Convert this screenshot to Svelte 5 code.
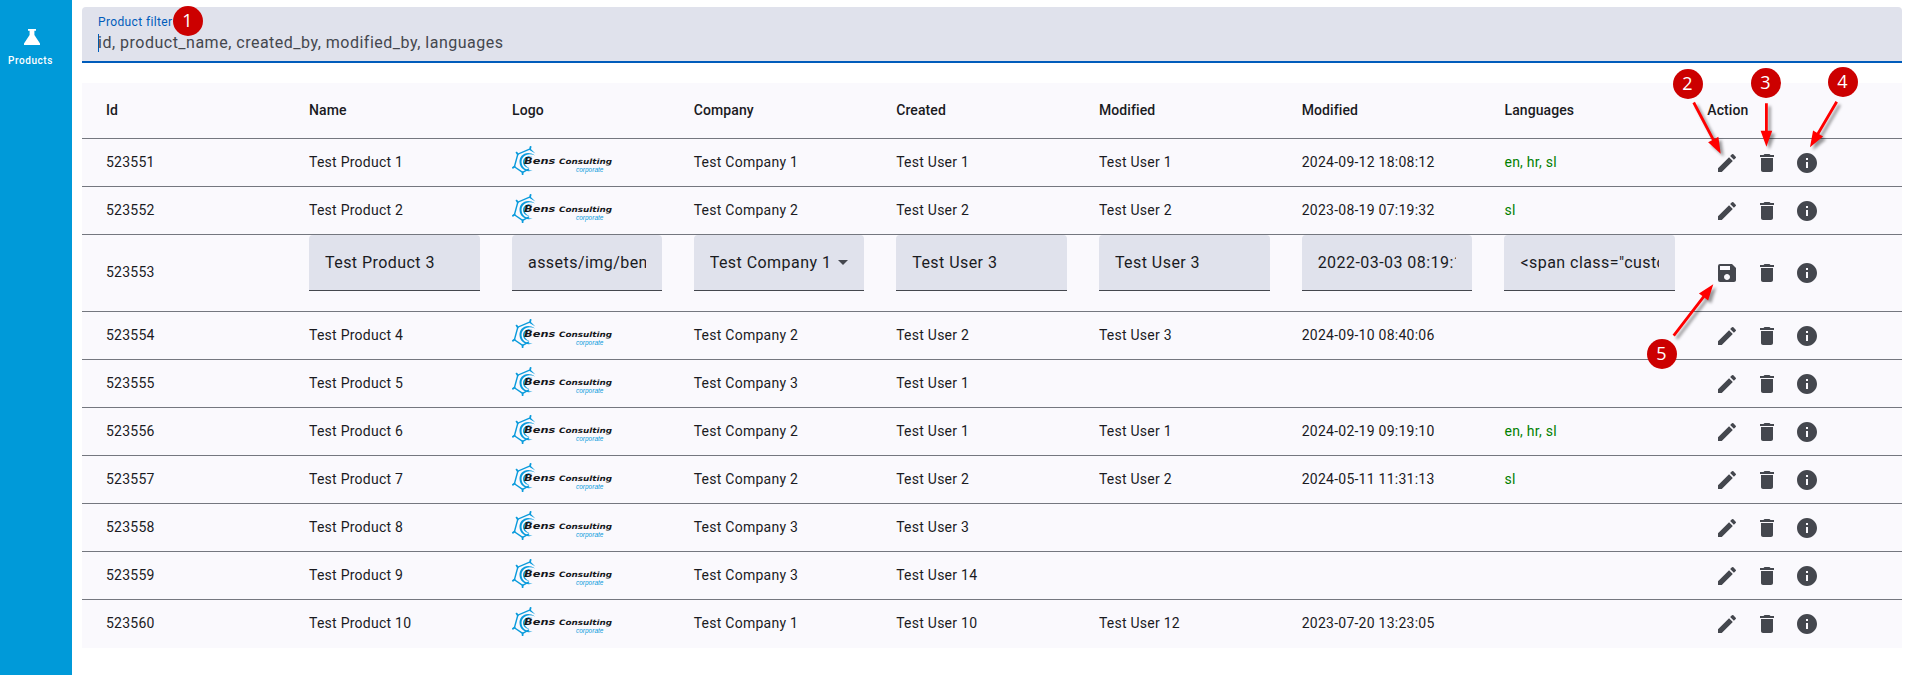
<script>
  const columns = ['Id', 'Name', 'Logo', 'Company', 'Created', 'Modified', 'Modified', 'Languages', 'Action'];

  const rows = [
    { id: 523551, name: 'Test Product 1', company: 'Test Company 1', created: 'Test User 1', modified: 'Test User 1', date: '2024-09-12 18:08:12', langs: 'en, hr, sl' },
    { id: 523552, name: 'Test Product 2', company: 'Test Company 2', created: 'Test User 2', modified: 'Test User 2', date: '2023-08-19 07:19:32', langs: 'sl' },
    { id: 523553, editing: true, name: 'Test Product 3', logo: 'assets/img/bens.png', company: 'Test Company 1', created: 'Test User 3', modified: 'Test User 3', date: '2022-03-03 08:19:12', langs: '<span class="custom">' },
    { id: 523554, name: 'Test Product 4', company: 'Test Company 2', created: 'Test User 2', modified: 'Test User 3', date: '2024-09-10 08:40:06', langs: '' },
    { id: 523555, name: 'Test Product 5', company: 'Test Company 3', created: 'Test User 1', modified: '', date: '', langs: '' },
    { id: 523556, name: 'Test Product 6', company: 'Test Company 2', created: 'Test User 1', modified: 'Test User 1', date: '2024-02-19 09:19:10', langs: 'en, hr, sl' },
    { id: 523557, name: 'Test Product 7', company: 'Test Company 2', created: 'Test User 2', modified: 'Test User 2', date: '2024-05-11 11:31:13', langs: 'sl' },
    { id: 523558, name: 'Test Product 8', company: 'Test Company 3', created: 'Test User 3', modified: '', date: '', langs: '' },
    { id: 523559, name: 'Test Product 9', company: 'Test Company 3', created: 'Test User 14', modified: '', date: '', langs: '' },
    { id: 523560, name: 'Test Product 10', company: 'Test Company 1', created: 'Test User 10', modified: 'Test User 12', date: '2023-07-20 13:23:05', langs: '' }
  ];

  const icons = {
    edit: 'M3 17.25V21h3.75L17.81 9.94l-3.75-3.75L3 17.25zM20.71 7.04a.996.996 0 0 0 0-1.41l-2.34-2.34a.996.996 0 0 0-1.41 0l-1.83 1.83 3.75 3.75 1.83-1.83z',
    save: 'M17 3H5a2 2 0 0 0-2 2v14a2 2 0 0 0 2 2h14c1.1 0 2-.9 2-2V7l-4-4zm-5 16c-1.66 0-3-1.34-3-3s1.34-3 3-3 3 1.34 3 3-1.34 3-3 3zm3-10H5V5h10v4z',
    trash: 'M6 19c0 1.1.9 2 2 2h8c1.1 0 2-.9 2-2V7H6v12zM19 4h-3.5l-1-1h-5l-1 1H5v2h14V4z',
    info: 'M12 2C6.48 2 2 6.48 2 12s4.48 10 10 10 10-4.48 10-10S17.52 2 12 2zm1 15h-2v-6h2v6zm0-8h-2V7h2v2z'
  };

  const badges = [
    { n: 1, x: 187.5, y: 20.5 },
    { n: 2, x: 1687.5, y: 83.5, from: [1693.7, 102.5], to: [1720.7, 153.7] },
    { n: 3, x: 1765.5, y: 82.5, from: [1766.4, 103.3], to: [1766.4, 146.7] },
    { n: 4, x: 1842.5, y: 81.5, from: [1836.7, 101.7], to: [1810, 147.3] },
    { n: 5, x: 1661.5, y: 353.5, from: [1673.7, 335.7], to: [1713.3, 284.3] }
  ];

  function arrow(b) {
    const dx = b.to[0] - b.from[0];
    const dy = b.to[1] - b.from[1];
    return { len: Math.hypot(dx, dy), angle: (Math.atan2(dy, dx) * 180) / Math.PI };
  }
</script>

{#snippet icon(name)}
  <button class="icon" aria-label={name}>
    <svg viewBox="0 0 24 24"><path d={icons[name]} /></svg>
  </button>
{/snippet}

{#snippet logo()}
  <svg class="logo" viewBox="0 0 102 32">
    <g fill="none" stroke="#0a9bdc">
      <path stroke-width="1.4" d="M17.6 4.2 L5.8 9.2 L2.4 21.8 L10.6 27.4 L17 23.8" />
      <path stroke-width="1.8" stroke-linecap="round" d="M18.6 1.8 L18 4.2 M4.6 7.6 L5.8 9.4 M.9 22.8 L2.6 21.6 M10.6 29.2 V27.4" />
    </g>
    <g fill="#0a9bdc">
      <path d="M17 4.8 L18.6 3.8 L23.4 8.4z" />
      <path d="M23 10.4 C15 4.8 6.6 9.8 7.6 18 C8.2 24 14.6 28 20.6 25.4 C14.6 26.2 10 22.6 9.6 17.6 C9 11.2 15.4 7 23 10.4z" />
      <path d="M21 11.4 C16 9.8 11 12.6 11 17 C11 20.4 14 23 17.6 23.2 C14.2 22 12.4 19.6 12.6 17 C12.8 13.6 16.2 11 21 11.4z" />
    </g>
    <text x="12.1" y="19.3" class="brand" font-size="8.6" textLength="31.2" lengthAdjust="spacingAndGlyphs">Bens</text>
    <text x="47" y="19.3" class="brand" font-size="7.4" textLength="53" lengthAdjust="spacingAndGlyphs">Consulting</text>
    <text x="64" y="27" class="sub" textLength="27.4" lengthAdjust="spacingAndGlyphs">corporate</text>
  </svg>
{/snippet}

<div class="page">
  <nav>
    <svg class="flask" viewBox="0 0 16 16"><path d="M4 0h8v1.7h-1.6v4.2L16 14.6V16H0v-1.4l5.6-8.7V1.7H4z" /></svg>
    <span>Products</span>
  </nav>

  <main>
    <div class="filter">
      <label for="product-filter">Product filter</label>
      <div class="entry"><i class="caret"></i><input id="product-filter" placeholder="id, product_name, created_by, modified_by, languages" /></div>
    </div>

    <div class="table">
      <div class="row head">
        {#each columns as c}<div>{c}</div>{/each}
      </div>
      {#each rows as r}
        {#if r.editing}
          <div class="row edit">
            <div>{r.id}</div>
            <div class="field"><span>{r.name}</span></div>
            <div class="field"><span>{r.logo}</span></div>
            <div class="field select"><span>{r.company}</span><i class="down"></i></div>
            <div class="field"><span>{r.created}</span></div>
            <div class="field"><span>{r.modified}</span></div>
            <div class="field"><span>{r.date}</span></div>
            <div class="field"><span>{r.langs}</span></div>
            <div class="actions">{@render icon('save')}{@render icon('trash')}{@render icon('info')}</div>
          </div>
        {:else}
          <div class="row">
            <div>{r.id}</div>
            <div>{r.name}</div>
            <div class="brandcell">{@render logo()}</div>
            <div>{r.company}</div>
            <div>{r.created}</div>
            <div>{r.modified}</div>
            <div>{r.date}</div>
            <div class="langs">{r.langs}</div>
            <div class="actions">{@render icon('edit')}{@render icon('trash')}{@render icon('info')}</div>
          </div>
        {/if}
      {/each}
    </div>
  </main>

  <svg class="arrows" width="1907" height="675">
    {#each badges.filter((b) => b.from) as b}
      {@const a = arrow(b)}
      <g class="arrow">
        <g transform="translate({b.from[0]} {b.from[1]}) rotate({a.angle})">
          <path d="M0 -1.4 H{a.len - 16} V-5.8 L{a.len} 0 L{a.len - 16} 5.8 V1.4 H0z" />
        </g>
      </g>
    {/each}
  </svg>
  {#each badges as b}
    <b class="badge" style="left:{b.x}px;top:{b.y}px">{b.n}</b>
  {/each}
</div>

<style>
  :global(body) { background: #fff; overflow: hidden; }
  .page {
    position: relative;
    display: flex;
    width: 1907px;
    height: 675px;
    overflow: hidden;
    font-family: Roboto, sans-serif;
    color: #1a1b1f;
  }
  nav {
    box-sizing: border-box;
    flex: none;
    width: 72px;
    padding: 29px 11px 0 0;
    display: flex;
    flex-direction: column;
    align-items: center;
    background: #009ad9;
    color: #fff;
    font-size: 10px;
    font-weight: 500;
    letter-spacing: .55px;
  }
  .flask { width: 16px; height: 16px; margin: 0 0 10px 3px; fill: #fff; }
  nav span { line-height: 12px; }
  main { flex: 1; padding: 7px 5px 0 10px; }
  .filter {
    box-sizing: border-box;
    height: 56px;
    padding: 7px 16px 0;
    border-bottom: 2px solid #005cbb;
    border-radius: 4px 4px 0 0;
    background: #e0e2ec;
  }
  .filter label { display: block; font-size: 12px; line-height: 16px; letter-spacing: .37px; color: #005cbb; }
  .entry { display: flex; align-items: center; height: 24px; margin-top: 1px; }
  .caret { width: 1px; height: 18px; margin-right: -1px; background: #005cbb; }
  input {
    flex: 1;
    padding: 0;
    border: 0;
    outline: 0;
    background: none;
    font: 16px/24px Roboto, sans-serif;
    letter-spacing: .5px;
  }
  input::placeholder { color: #44474e; opacity: 1; }
  .table { margin-top: 20px; background: #faf9fd; }
  .row {
    box-sizing: border-box;
    display: grid;
    grid-template-columns: 203px 203px 181.7px 202.5px 202.7px 202.8px 202.8px 202.8px 1fr;
    align-items: center;
    height: 48px;
    padding-left: 24px;
    border-bottom: 1px solid #74777f;
    font-size: 14px;
    line-height: 20px;
    letter-spacing: .25px;
  }
  .row > div { padding-bottom: 1px; }
  .row:last-child { border-bottom-color: transparent; }
  .head { height: 56px; font-weight: 500; letter-spacing: .1px; }
  .edit { height: 77px; }
  .row.edit > div { padding-bottom: 2px; }
  .langs { color: #008000; }
  .row.edit > .field {
    box-sizing: border-box;
    align-self: start;
    display: flex;
    align-items: center;
    height: 56px;
    margin-right: 32px;
    padding: 0 16px;
    border-bottom: 1px solid #44474e;
    border-radius: 4px 4px 0 0;
    background: #e0e2ec;
    font-size: 16px;
    letter-spacing: .45px;
  }
  .field span { flex: 1; overflow: hidden; white-space: nowrap; line-height: 24px; }
  .down { border: 5px solid transparent; border-top-color: #44474e; border-bottom: 0; }
  .row > .actions { display: flex; padding: 1px 0 0; }
  .row.edit > .actions { padding: 0; }
  .icon { width: 40px; height: 40px; padding: 8px; border: 0; background: none; }
  .icon svg { display: block; width: 24px; height: 24px; fill: #44474e; }
  .row > .brandcell { align-self: start; padding-top: 6px; }
  .logo { display: block; width: 102px; height: 32px; }
  .brand { font-family: "DejaVu Sans", sans-serif; font-weight: 700; font-style: italic; letter-spacing: 0; fill: #16181c; }
  .sub { font: italic 6.4px "Liberation Sans", sans-serif; letter-spacing: 0; fill: #0a9bdc; }
  .arrows { position: absolute; inset: 0; pointer-events: none; }
  .arrow { fill: #f00; filter: drop-shadow(3px 3px 1.5px rgba(0, 0, 0, .4)); }
  .badge {
    position: absolute;
    width: 30px;
    height: 30px;
    margin: -15px 0 0 -15px;
    border-radius: 50%;
    background: #c00;
    color: #fff;
    font: 18px/29px "Open Sans", sans-serif;
    text-align: center;
  }
</style>
